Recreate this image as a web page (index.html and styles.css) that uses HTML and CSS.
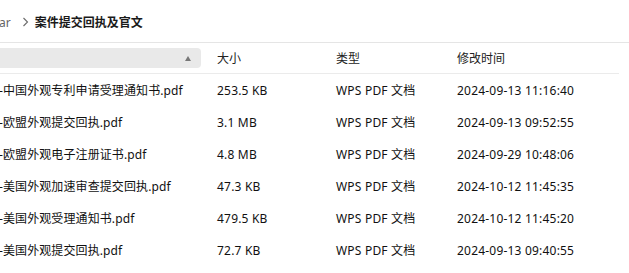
FILE: index.html
```html
<!DOCTYPE html>
<html lang="zh-CN">
<head>
    <meta charset="UTF-8">
    <title>案件提交回执及官文</title>
    <link rel="stylesheet" href="styles.css">
</head>
<body>
    <div class="breadcrumb">
        <span class="crumb-prev">ar</span>
        <svg class="crumb-sep" width="7" height="10" viewBox="0 0 7 10">
            <path d="M1.5 1 L5.5 5 L1.5 9" fill="none" stroke="#6b6b6b" stroke-width="1.1"/>
        </svg>
        <span class="crumb-current">案件提交回执及官文</span>
    </div>

    <div class="file-list">
        <div class="list-header">
            <div class="col-name">
                <div class="sort-box">
                    <span class="sort-arrow"></span>
                </div>
            </div>
            <div class="col">大小</div>
            <div class="col">类型</div>
            <div class="col">修改时间</div>
        </div>

        <div class="row">
            <div class="col-name">-中国外观专利申请受理通知书.pdf</div>
            <div class="col">253.5 KB</div>
            <div class="col">WPS PDF 文档</div>
            <div class="col">2024-09-13 11:16:40</div>
        </div>
        <div class="row">
            <div class="col-name">-欧盟外观提交回执.pdf</div>
            <div class="col">3.1 MB</div>
            <div class="col">WPS PDF 文档</div>
            <div class="col">2024-09-13 09:52:55</div>
        </div>
        <div class="row">
            <div class="col-name">-欧盟外观电子注册证书.pdf</div>
            <div class="col">4.8 MB</div>
            <div class="col">WPS PDF 文档</div>
            <div class="col">2024-09-29 10:48:06</div>
        </div>
        <div class="row">
            <div class="col-name">-美国外观加速审查提交回执.pdf</div>
            <div class="col">47.3 KB</div>
            <div class="col">WPS PDF 文档</div>
            <div class="col">2024-10-12 11:45:35</div>
        </div>
        <div class="row">
            <div class="col-name">-美国外观受理通知书.pdf</div>
            <div class="col">479.5 KB</div>
            <div class="col">WPS PDF 文档</div>
            <div class="col">2024-10-12 11:45:20</div>
        </div>
        <div class="row">
            <div class="col-name">-美国外观提交回执.pdf</div>
            <div class="col">72.7 KB</div>
            <div class="col">WPS PDF 文档</div>
            <div class="col">2024-09-13 09:40:55</div>
        </div>
    </div>
</body>
</html>
```

FILE: styles.css
```css
body {
    margin: 0;
    padding: 0;
    background-color: #ffffff;
    font-family: "Noto Sans", "Noto Sans CJK SC", sans-serif;
    font-size: 12px;
    color: #111;
    overflow: hidden;
}
.breadcrumb {
    height: 43px;
    display: flex;
    align-items: center;
    border-bottom: 1px solid #e5e5e5;
    box-sizing: border-box;
    padding-top: 2px;
}
.crumb-prev {
    color: #666;
    margin-left: -1px;
}
.crumb-sep {
    margin-left: 11px;
    margin-right: 6px;
}
.crumb-current {
    font-weight: 700;
    color: #1a1a1a;
}
.file-list {
    width: 619px;
}
.list-header,
.row {
    display: grid;
    grid-template-columns: 217px 119px 121px 1fr;
    align-items: center;
}
.list-header {
    height: 30px;
    border-bottom: 1px solid #ebebeb;
    color: #222;
}
.list-header .col-name {
    height: 100%;
    display: flex;
    align-items: center;
}
.sort-box {
    height: 20px;
    margin-left: -10px;
    width: 212px;
    background-color: #e9e9e9;
    border-radius: 4px;
    display: flex;
    align-items: center;
    justify-content: flex-end;
    box-sizing: border-box;
    padding-right: 10px;
}
.sort-arrow {
    width: 0;
    height: 0;
    border-left: 3.5px solid transparent;
    border-right: 3.5px solid transparent;
    border-bottom: 5px solid #777;
}
.row {
    height: 32px;
}
.col-name {
    white-space: nowrap;
    overflow: hidden;
    margin-left: -1px;
}
.row .col-name {
    letter-spacing: 0.1px;
}
.col {
    white-space: nowrap;
}
.row .col {
    letter-spacing: 0.2px;
}
```
